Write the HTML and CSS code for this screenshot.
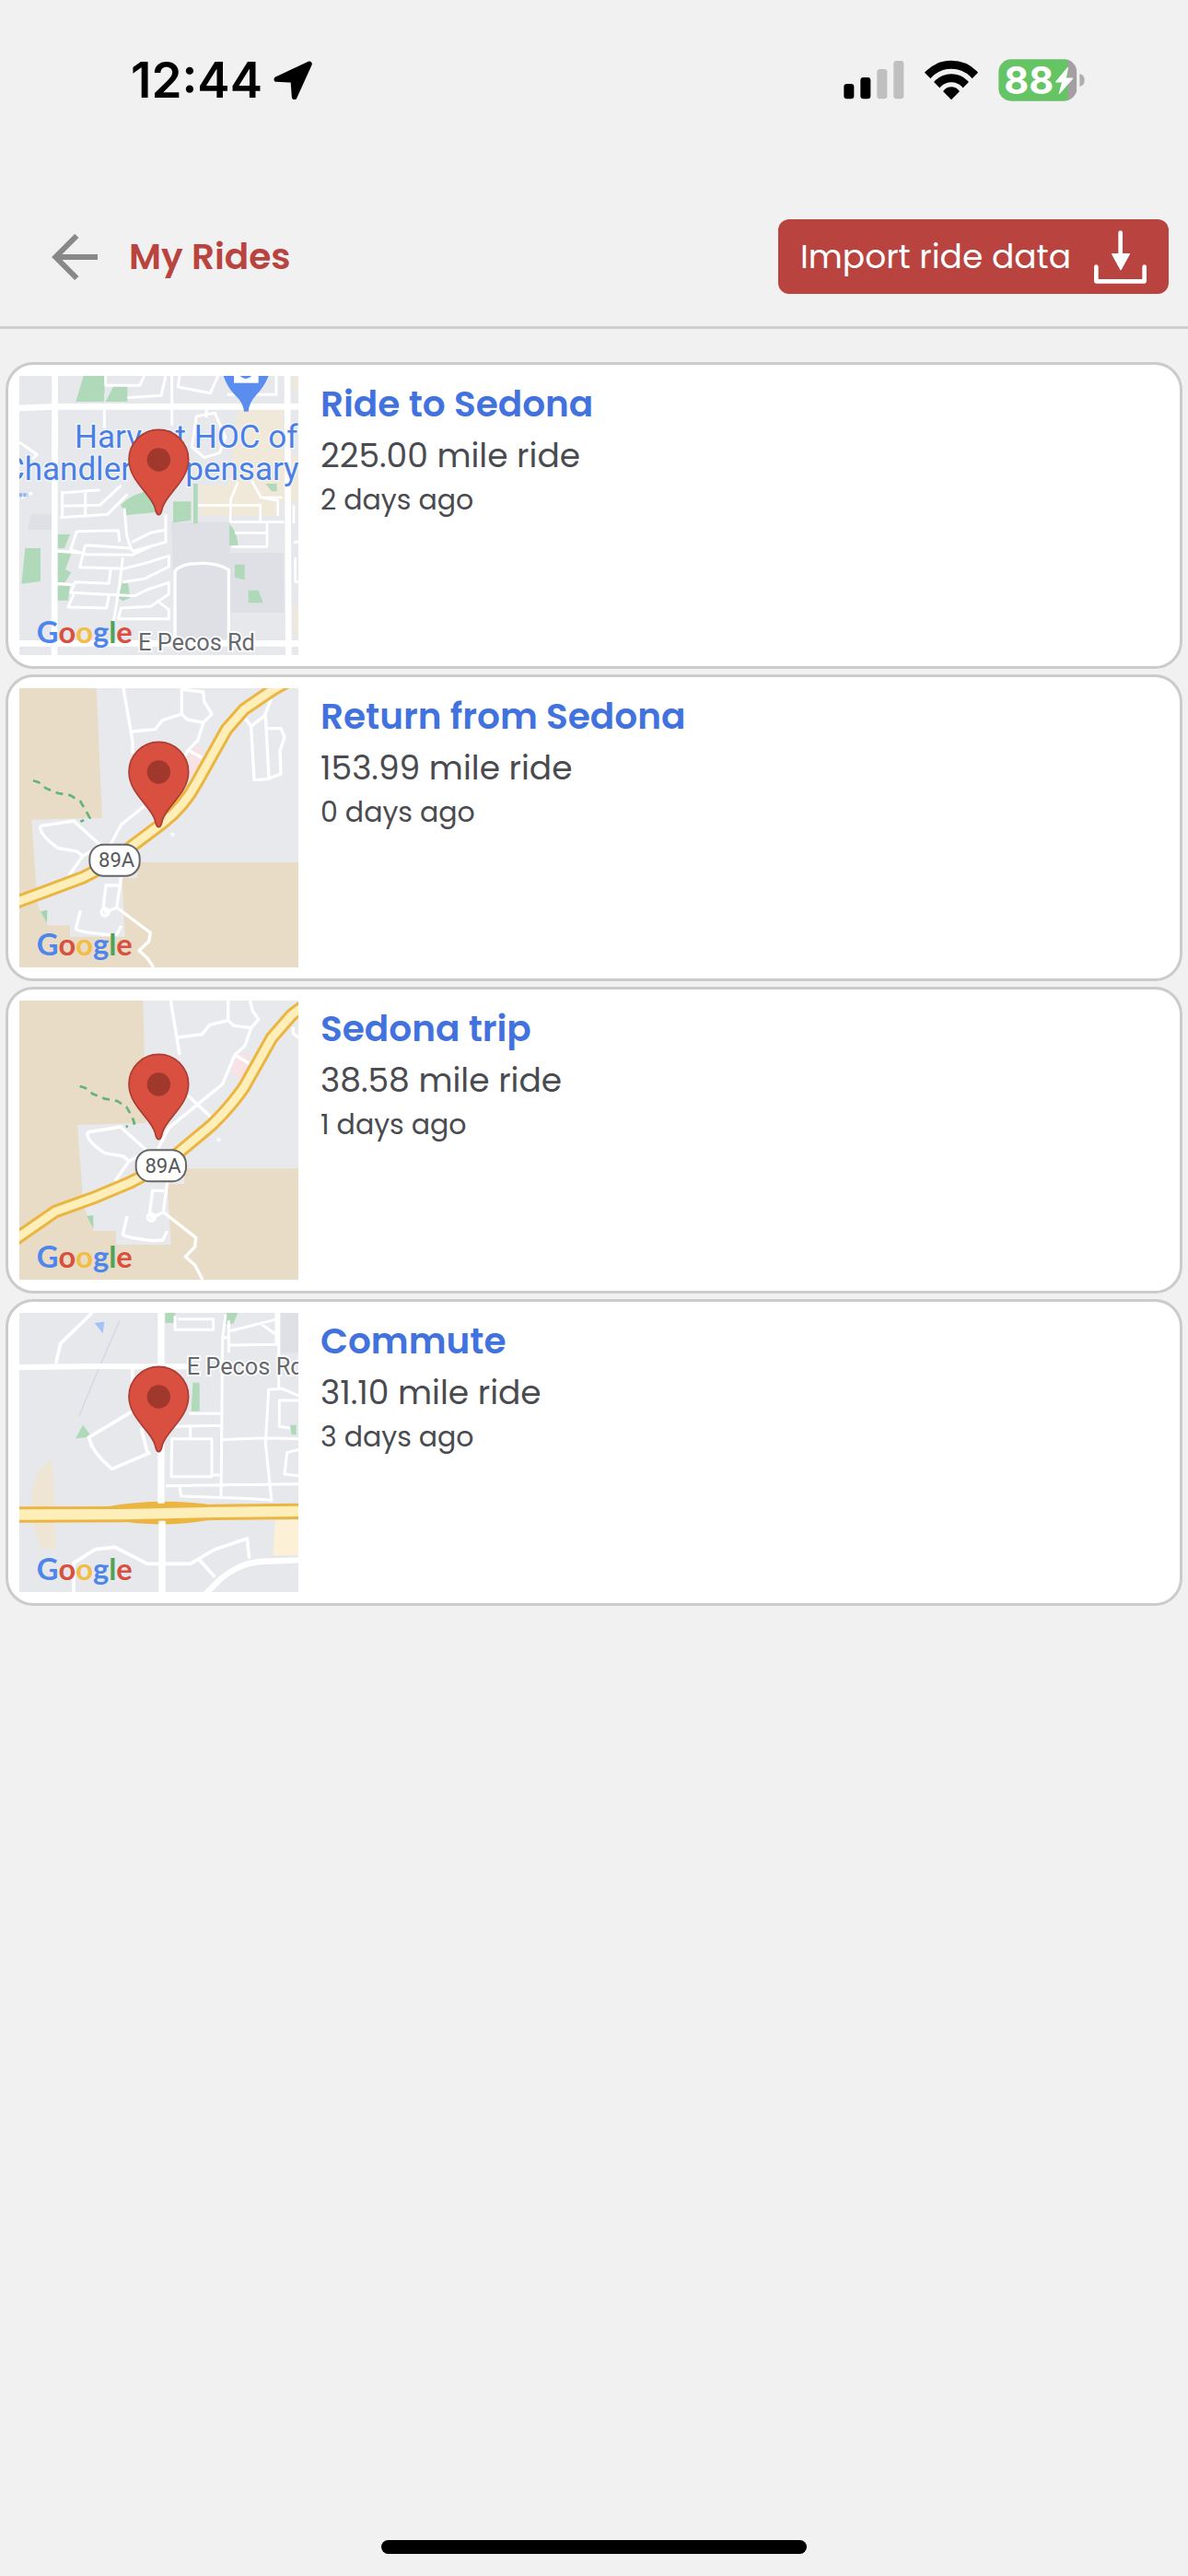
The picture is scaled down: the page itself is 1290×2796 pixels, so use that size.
FILE: index.html
```html
<!DOCTYPE html>
<html lang="en">
<head>
<meta charset="utf-8">
<meta name="viewport" content="width=device-width, initial-scale=1">
<title>My Rides</title>
<link rel="stylesheet" href="styles.css">
</head>
<body>
<svg class="defs" width="0" height="0" aria-hidden="true">
  <defs>
    <g id="pin">
      <path d="M517 521 C509 521 508 511 505 499 C494 454 420 412 420 341 A97 97 0 0 1 614 341 C614 412 540 454 529 499 C526 511 525 521 517 521 Z" fill="#d94f40" stroke="#ac3d33" stroke-width="5"/>
      <circle cx="517" cy="342" r="38" fill="#a1382d"/>
    </g>
    <g id="google">
      <text x="119" y="938" class="logo"><tspan fill="#4f86ec">G</tspan><tspan fill="#d9503f">o</tspan><tspan fill="#f2bd42">o</tspan><tspan fill="#4f86ec">g</tspan><tspan fill="#4da35a">l</tspan><tspan fill="#d9503f">e</tspan></text>
    </g>
  </defs>
</svg>

<div class="status">
  <div class="status-left">
    <span class="clock">12:44</span>
    <svg width="42" height="42" viewBox="587 80 126 126" aria-hidden="true"><path d="M597 140 L704 90 L655 198 L651 143 Z" fill="#000" stroke="#000" stroke-width="17" stroke-linejoin="round"/></svg>
  </div>
  <div class="status-right">
    <svg width="66" height="42" viewBox="107 77 198 126" aria-hidden="true">
      <rect x="108" y="152" width="33" height="49" rx="10"/>
      <rect x="162" y="131" width="33" height="70" rx="10"/>
      <rect x="216" y="104" width="33" height="97" rx="10" fill="#bfbfbf"/>
      <rect x="270" y="77" width="33" height="124" rx="10" fill="#bfbfbf"/>
    </svg>
    <svg width="58" height="44" viewBox="370 73 174 132" aria-hidden="true">
      <clipPath id="fan"><path d="M457 203 L357 101 V40 H557 V101 Z"/></clipPath>
      <g clip-path="url(#fan)">
        <circle cx="457" cy="193" r="104" fill="none" stroke="#000" stroke-width="27"/>
        <circle cx="457" cy="193" r="61" fill="none" stroke="#000" stroke-width="27"/>
        <circle cx="457" cy="193" r="32"/>
      </g>
    </svg>
    <svg class="battery" width="94" height="46" viewBox="611 70 282 138" aria-hidden="true">
      <clipPath id="cell"><rect x="612" y="71" width="255" height="136" rx="42"/></clipPath>
      <g clip-path="url(#cell)"><rect x="612" y="71" width="255" height="136" fill="#a59fa4"/><rect x="612" y="71" width="226" height="136" fill="#65c565"/></g>
      <path d="M876 119 Q892 122 892 139 Q892 156 876 160 Z" fill="#b0adb0"/>
      <text x="630" y="184" class="charge">88</text>
      <path d="M838 97 L798 145 H820 L809 184 L854 133 H831 Z" fill="#fff" stroke="#fff" stroke-width="3" stroke-linejoin="round"/>
    </svg>
  </div>
</div>

<header class="bar">
  <button class="back" type="button" aria-label="Back">
    <svg width="50" height="50" viewBox="168 159 150 150" aria-hidden="true"><path d="M318 234 H184 M250 165 L181 234 L250 303" fill="none" stroke="#888" stroke-width="18"/></svg>
  </button>
  <h1>My Rides</h1>
  <button class="import" type="button">
    <span>Import ride data</span>
    <svg width="57" height="58" viewBox="1104 88 171 174" aria-hidden="true">
      <path d="M1111 207 V254 H1268 V207 M1190 96 V170" fill="none" stroke="#fff" stroke-width="14" stroke-linecap="round" stroke-linejoin="round"/>
      <path d="M1163 165 H1219 L1191 216 Z" fill="#fff" stroke="#fff" stroke-width="4" stroke-linejoin="round"/>
    </svg>
  </button>
</header>

<main class="rides">
  <article class="ride">
    <svg class="map" viewBox="63 69 909 909" role="img" aria-label="Map">
      <rect x="63" y="69" width="909" height="909" fill="#e7e8ec"/>
      <path d="M558 545 H748 V645 H925 V840 H750 V925 H570 Z M100 520 H168 V570 H90 Z" fill="#dfe0e5"/>
      <path d="M775 180 H922 V330 H970 V480 H910 V525 H650 V425 H745 Z M955 70 H972 V115 H955 Z M957 820 H972 V905 H957 Z" fill="#f0e9da"/>
      <path d="M272 69 H344 L338 153 H247 Z M372 98 H415 V153 H344 Z M393 490 Q430 450 500 440 L518 512 L412 522 Z M564 478 H622 V540 L564 547 Z M630 420 H644 V550 H630 Z M187 585 H228 L210 630 H187 Z M187 645 H233 L213 700 L232 708 L212 742 H187 Z M187 752 H228 L222 800 H187 Z M82 630 H132 V738 L70 746 Z M398 743 H417 L424 792 L400 802 L385 792 Z M747 553 Q770 570 776 620 L747 622 Z M765 683 H797 V733 L765 725 Z M809 767 H842 L857 808 H809 Z M865 420 H902 V445 L885 445 Z" fill="#b0d9b9"/>
      <g fill="none" stroke="#fff" stroke-linejoin="round">
        <path d="M63 174 L180 169 H972 M63 940 H972" stroke-width="20"/>
        <path d="M179 69 L177 978 M936 69 L940 978" stroke-width="20"/>
        <path d="M344 69 V100 H455 L470 69 M415 140 L525 133 L540 69 M560 69 V230 M340 180 V240 M585 69 L580 105 L685 125 L710 69 M740 130 H900 V69 M625 300 L640 200 L700 190 L735 270 L715 320 L665 335 Z M672 180 V205 M63 285 L120 325 L105 340 M70 465 L105 450" stroke-width="9"/>
        <path d="M195 530 L350 520 L415 455 M203 445 V530 M205 493 L325 490 L395 425 M278 450 V530 M203 450 L325 440 M405 500 L413 590 L430 640 M540 520 V610 L430 640 M430 610 L490 580 L540 570 M250 575 L385 572 L390 610 M250 575 L230 635 L280 650 L430 652 L500 620 M278 620 L425 630 M278 620 L260 692 L400 697 L470 680 L550 655 V690 L470 730 L400 740 M360 700 L355 745 L245 740 L230 775 L440 785 L480 765 L550 742 V780 L490 820 L395 825 L385 860 H550 V830 L510 800 M240 780 L222 822 L347 825 L355 785 M400 660 L390 745 L370 870 M187 640 L260 645 M187 745 L240 750" stroke-width="9"/>
        <path d="M570 930 V705 Q590 680 645 680 Q700 675 745 700 V930" stroke-width="10"/>
        <path d="M645 490 H848 V550 M750 545 H925 M750 545 L752 470 L775 415 M765 580 H870 V625 H755 M870 550 V625 M820 410 L850 465 L905 475 V525 M850 465 H920 M957 490 V550 M957 610 H972 M962 660 V740 H972" stroke-width="8"/>
      </g>
      <path d="M728 69 H875 Q860 105 836 130 Q812 155 809 185 H795 Q792 155 764 130 Q740 105 728 69 Z" fill="#5b8def"/>
      <path d="M762 69 H842 V92 H762 Z" fill="#fff"/><path d="M782 69 H820 Q800 88 782 69 Z" fill="#5b8def"/>
      <path d="M63 457 H92" stroke="#8fb1ee" stroke-width="12" stroke-dasharray="10 3"/>
      <text x="243" y="303" class="place">Harvest HOC of</text>
      <text x="974" y="408" text-anchor="end" class="place">Chandler Dispensary</text>
      <text x="450" y="962" class="road">E Pecos Rd</text>
      <use href="#pin"/>
      <use href="#google"/>
    </svg>
    <div class="info">
      <h2><a href="#ride-1">Ride to Sedona</a></h2>
      <p class="distance">225.00 mile ride</p>
      <p class="age">2 days ago</p>
    </div>
  </article>

  <article class="ride">
    <svg class="map" viewBox="63 66 909 909" role="img" aria-label="Map">
      <rect x="63" y="66" width="909" height="909" fill="#e8dcc6"/>
      <path d="M314 66 H1000 V633 H448 V683 H398 L407 875 H228 V838 H155 L122 770 L103 494 L333 488 Z" fill="#e7e9ed"/>
      <path d="M630 262 L660 258 V330 L620 370 L612 290 Z" fill="#f8e2e4"/>
      <path d="M132 793 L154 788 L153 832 Z" fill="#a5d5b3"/>
      <path d="M560 533 l12 8 -10 12 -9 -12 Z" fill="#f7f8fa"/>
      <g fill="none" stroke="#fff" stroke-width="10" stroke-linejoin="round">
        <path d="M402 66 L432 240 V280 M428 207 L505 200 L530 170 L592 150 V66 M592 150 L610 168 L662 178 L690 150 L665 110 L662 78 L592 70 M662 178 L645 235 L612 268 L590 310 M612 268 L658 292 M470 450 L395 510 L360 575"/>
        <path d="M884 100 L862 155 L818 190 L800 165 M818 190 L828 365 L870 362 L915 345 L912 270 L927 225 L915 197 H870 M865 155 L876 360 M130 515 L240 498 L325 575 M130 515 Q130 545 190 587 L250 597 L270 612 L225 675 M270 612 L300 595 M395 680 L380 780 L345 795 L337 775 L345 708 H385 M380 780 L490 862 L485 890 L453 920 L480 945 L500 975 M262 790 L247 850 Q255 860 345 868 L380 868 L395 840"/>
        <circle cx="342" cy="795" r="12"/>
      </g>
      <path d="M108 367 L125 372 L150 392 L190 408 L230 415 L262 435 L280 465 L292 488 L262 500" fill="none" stroke="#64b479" stroke-width="8" stroke-dasharray="24 18"/>
      <path d="M55 762 L150 727 L270 682 Q350 645 430 580 L530 505 Q600 450 640 375 L738 200 L795 135 L890 70 L930 48" fill="none" stroke="#eab641" stroke-width="44" stroke-linejoin="round"/>
      <path d="M55 762 L150 727 L270 682 Q350 645 430 580 L530 505 Q600 450 640 375 L738 200 L795 135 L890 70 L930 48" fill="none" stroke="#fdeeba" stroke-width="26" stroke-linejoin="round"/>
      <rect x="292" y="575" width="163" height="102" rx="46" fill="#fff" stroke="#666" stroke-width="6"/>
      <text x="380" y="648" text-anchor="middle" class="shield">89A</text>
      <use href="#pin" y="-3"/>
      <use href="#google" y="-3"/>
    </svg>
    <div class="info">
      <h2><a href="#ride-2">Return from Sedona</a></h2>
      <p class="distance">153.99 mile ride</p>
      <p class="age">0 days ago</p>
    </div>
  </article>

  <article class="ride">
    <svg class="map" viewBox="63 63 909 909" role="img" aria-label="Map">
      <rect x="63" y="63" width="909" height="909" fill="#e8dcc6"/>
      <path d="M466 63 H972 V610 H600 V660 H545 L557 858 H378 V813 H305 L272 730 L252 468 L475 462 Z" fill="#e7e9ed"/>
      <path d="M768 238 L812 235 V270 L790 320 L752 300 Z" fill="#f8e2e4"/>
      <path d="M283 765 L304 762 L304 806 Z" fill="#a5d5b3"/>
      <path d="M712 508 l9 8 -9 9 -9 -9 Z" fill="#f7f8fa"/>
      <g fill="none" stroke="#fff" stroke-width="10" stroke-linejoin="round">
        <path d="M556 63 L585 240 M580 183 L658 173 L683 142 L743 128 V63 M743 128 L762 145 L818 152 L842 125 L822 95 L815 63 M818 152 L798 210 L765 240 L725 335 L645 400 L550 478 L515 545 M765 240 L812 268 M612 372 L690 445 M955 150 V170 L975 185"/>
        <path d="M285 492 L392 474 L475 548 M285 492 Q280 520 342 560 L402 570 L420 586 L375 650 M420 586 L450 570 M545 655 L532 752 L495 770 L488 750 L497 682 H535 M532 752 L638 835 L635 865 L604 897 L635 925 L660 972 M414 765 L400 825 Q410 835 500 845 L530 843 L545 813"/>
        <circle cx="493" cy="769" r="12"/>
      </g>
      <path d="M260 342 L277 347 L302 367 L342 383 L382 390 L412 410 L430 440 L438 463 L410 474" fill="none" stroke="#64b479" stroke-width="8" stroke-dasharray="24 18"/>
      <path d="M50 840 L180 750 L300 707 L420 657 Q500 620 580 560 L690 468 Q750 410 795 345 L885 185 L950 110 L990 80" fill="none" stroke="#eab641" stroke-width="44" stroke-linejoin="round"/>
      <path d="M50 840 L180 750 L300 707 L420 657 Q500 620 580 560 L690 468 Q750 410 795 345 L885 185 L950 110 L990 80" fill="none" stroke="#fdeeba" stroke-width="26" stroke-linejoin="round"/>
      <rect x="443" y="550" width="163" height="102" rx="46" fill="#fff" stroke="#666" stroke-width="6"/>
      <text x="531" y="623" text-anchor="middle" class="shield">89A</text>
      <use href="#pin" y="-6"/>
      <use href="#google" y="-6"/>
    </svg>
    <div class="info">
      <h2><a href="#ride-3">Sedona trip</a></h2>
      <p class="distance">38.58 mile ride</p>
      <p class="age">1 days ago</p>
    </div>
  </article>

  <article class="ride">
    <svg class="map" viewBox="63 75 909 909" role="img" aria-label="Map">
      <rect x="63" y="75" width="909" height="909" fill="#e7e8ec"/>
      <path d="M915 75 H972 V205 H915 Z" fill="#dfe0e5"/>
      <path d="M168 548 Q180 700 182 845 L135 840 Q75 700 125 590 Z" fill="#eee5d5"/>
      <path d="M897 750 H972 V865 H890 Z" fill="#fcf1d6"/>
      <path d="M538 75 H571 V108 H538 Z M738 75 H775 L760 110 H735 Z M628 302 H650 V395 H623 Z M270 440 L293 470 L280 480 L246 484 Z M945 440 H965 V472 H950 Z" fill="#b0d9b9"/>
      <path d="M308 108 L340 104 L335 142 Z" fill="#a3c2f7"/>
      <path d="M390 100 L318 265 L258 410" fill="none" stroke="#d3d6e6" stroke-width="4"/>
      <g fill="none" stroke="#fff" stroke-linejoin="round">
        <path d="M63 252 L300 249 L520 250 H620" stroke-width="18"/>
        <path d="M300 75 L197 175 L182 240 M432 250 V395 L290 480 Q300 530 365 583 L490 530 M460 450 L480 530 M290 480 L300 515" stroke-width="11"/>
        <path d="M570 85 V130 H695 V95 H580 M735 80 L725 155 L720 680 M722 155 H745 M745 100 V205 M745 180 L900 178 V75 M745 135 L905 95 M850 110 L905 150 M908 75 V320 M615 403 H718 M565 445 L718 442 M620 445 V485 M560 485 H690 V608 H558 Z M720 488 L870 482 L972 485 M690 603 H715 M540 638 L972 632 M585 640 L590 672 L820 680 L885 685 M972 345 L920 322 L875 325 L865 500 L885 690 M972 360 H910 V445 L945 450 M972 520 L935 530 L927 600 L972 605" stroke-width="9"/>
        <path d="M240 984 V890 L310 845 L375 838 L480 892 H620 L700 845 L805 810 L812 875 M650 880 L700 935" stroke-width="11"/>
        <path d="M670 990 L720 940 Q780 890 850 885 L972 880" stroke-width="19"/>
      </g>
      <path d="M350 706 Q520 675 700 702 V746 Q520 780 370 748 Z" fill="#eab641"/>
      <path d="M63 732 L400 731 L700 724 L972 721" fill="none" stroke="#eab641" stroke-width="52"/>
      <path d="M525 70 V695 M528 752 V990" stroke="#fff" stroke-width="22" fill="none"/>
      <path d="M63 732 L400 731 L700 724 L972 721" fill="none" stroke="#fdeeba" stroke-width="34"/>
      <text x="608" y="276" class="road">E Pecos Rd</text>
      <use href="#pin" y="6"/>
      <use href="#google" y="6"/>
    </svg>
    <div class="info">
      <h2><a href="#ride-4">Commute</a></h2>
      <p class="distance">31.10 mile ride</p>
      <p class="age">3 days ago</p>
    </div>
  </article>
</main>

<div class="home"></div>
</body>
</html>
```
FILE: styles.css
```css
* {
  box-sizing: border-box;
}

body {
  margin: 0;
  min-height: 100vh;
  display: flex;
  flex-direction: column;
  background: #f1f1f1;
  color: #4a4b50;
  font-family: Poppins, Inter, "Noto Sans", sans-serif;
}

h1,
h2,
p {
  margin: 0;
}

svg {
  display: block;
  flex: none;
}

.defs {
  position: absolute;
}

.status {
  display: flex;
  justify-content: space-between;
  padding: 61px 112px 90px 142px;
  color: #000;
  font-family: Inter, sans-serif;
}

.status-left,
.status-right {
  display: flex;
  align-items: center;
  height: 52px;
}

.status-left {
  gap: 12px;
}

.status-right {
  gap: 22px;
}

.clock {
  font-size: 53px;
  line-height: 52px;
  font-weight: 600;
}

.battery {
  overflow: visible;
}

.charge {
  font-family: Inter, sans-serif;
  font-size: 124px;
  font-weight: 700;
  fill: #fff;
}

.bar {
  display: flex;
  align-items: center;
  padding: 35px 21px 35px 56px;
  border-bottom: 3px solid #cfcfcf;
}

.bar h1 {
  margin-left: 34px;
  color: #b9443f;
  font-size: 39px;
  line-height: 48px;
  font-weight: 600;
}

button {
  border: 0;
  padding: 0;
  background: none;
  font: inherit;
  cursor: pointer;
}

.import {
  display: flex;
  align-items: center;
  gap: 25px;
  height: 81px;
  margin-left: auto;
  padding: 0 24px;
  border-radius: 12px;
  background: #b9443f;
  color: #fff;
  font-size: 36px;
  line-height: 48px;
}

.rides {
  display: flex;
  flex-direction: column;
  gap: 6px;
  padding: 36px 6px;
}

.ride {
  display: flex;
  gap: 24px;
  padding: 12px;
  border: 3px solid #cbcbcb;
  border-radius: 30px;
  background: #fff;
}

.map {
  width: 303px;
  height: 303px;
}

.info {
  min-width: 0;
  padding-top: 1px;
}

.info h2 {
  font-size: 39px;
  line-height: 60px;
  font-weight: 600;
}

.info a {
  color: #4272de;
  text-decoration: none;
}

.distance {
  font-size: 36px;
  line-height: 52px;
}

.age {
  font-size: 30px;
  line-height: 44px;
}

.logo {
  font-family: Lato, sans-serif;
  font-size: 98px;
  font-weight: 700;
}

.place {
  font-family: Roboto, sans-serif;
  font-size: 105px;
  fill: #4a7fe5;
  stroke: #f3f5fa;
  stroke-width: 8px;
  paint-order: stroke;
}

.road {
  font-family: Roboto, sans-serif;
  font-size: 76px;
  fill: #66696d;
  stroke: #fff;
  stroke-width: 10px;
  paint-order: stroke;
}

.shield {
  font-family: Roboto, sans-serif;
  font-size: 66px;
  fill: #55575a;
}

.home {
  width: 462px;
  height: 15px;
  margin: auto auto 24px;
  border-radius: 8px;
  background: #000;
}
```
